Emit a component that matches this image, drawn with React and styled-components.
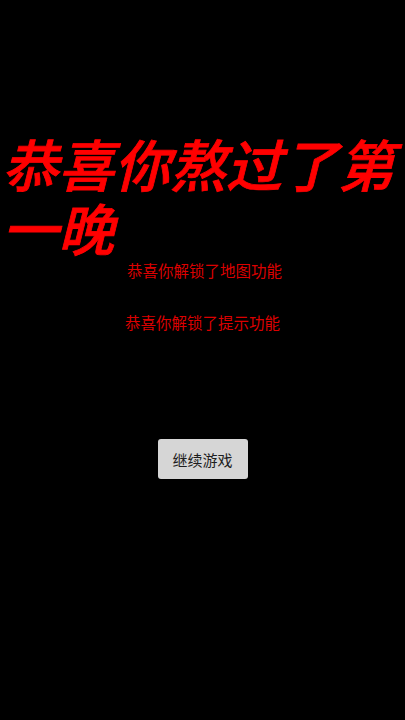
import React from 'react'
import styled, { createGlobalStyle } from 'styled-components'

const Global = createGlobalStyle`
html, body {
  margin: 0;
  padding: 0;
  background: #000;
}
body {
  font-family: "Noto Sans CJK SC", "Noto Sans", sans-serif;
}
`

const Screen = styled.div`
width: 405px;
height: 720px;
background-color: #000;
display: flex;
flex-direction: column;
align-items: center;
padding-top: 131px;
box-sizing: border-box;
`

const Title = styled.h1`
align-self: stretch;
margin: 0;
padding: 0 0 0 2px;
color: #ff0000;
font-size: 56px;
line-height: 64px;
font-weight: 500;
font-style: italic;
-webkit-text-stroke: 0.8px #ff0000;
`

const Note = styled.p`
margin: ${p => p.$top}px 0 0 ${p => p.$left}px;
color: #dc0000;
font-size: 15.5px;
line-height: 22px;
`

const Button = styled.button`
margin-top: 106px;
width: 90px;
height: 40px;
border: none;
border-radius: 3px;
background-color: #d6d6d6;
color: #1e1e1e;
font-family: "Noto Sans CJK SC", sans-serif;
font-size: 15px;
padding: 0;
cursor: pointer;
`

export default function App() {
  return (
    <>
      <Global />
      <Screen>
        <Title>恭喜你熬过了第一晚</Title>
        <Note $top={0} $left={4}>恭喜你解锁了地图功能</Note>
        <Note $top={30} $left={0}>恭喜你解锁了提示功能</Note>
        <Button>继续游戏</Button>
      </Screen>
    </>
  )
}
